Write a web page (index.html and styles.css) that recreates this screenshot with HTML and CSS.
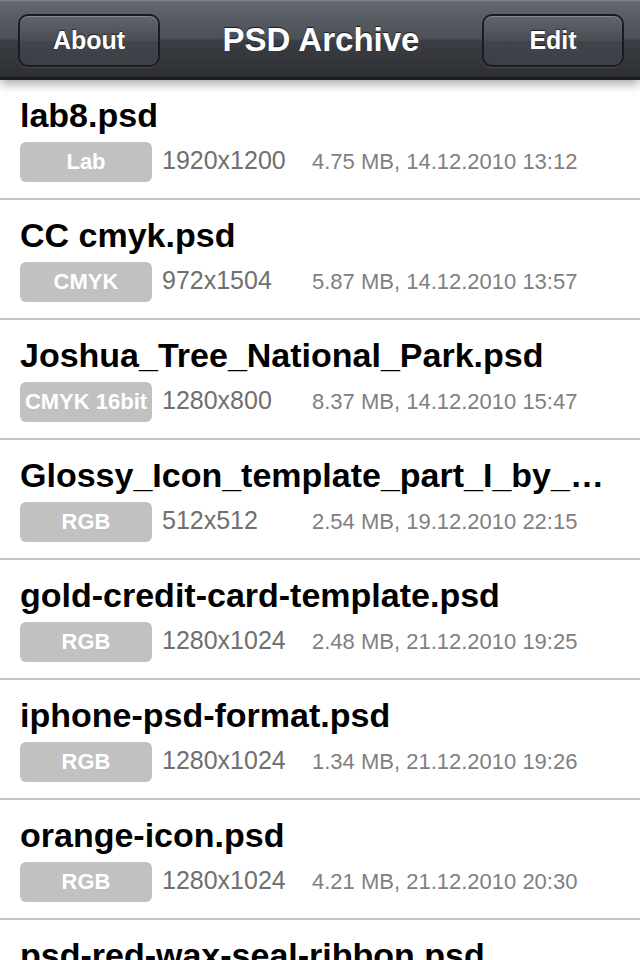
FILE: index.html
```html
<!DOCTYPE html>
<html lang="en">
<head>
    <title>PSD Archive</title>
    <link rel="stylesheet" href="styles.css">
</head>
<body>
    <div class="navbar">
        <button class="bar-btn">About</button>
        <h1 class="bar-title">PSD Archive</h1>
        <button class="bar-btn">Edit</button>
    </div>
    <ul class="files">
        <li class="file">
            <div class="name">lab8.psd</div>
            <div class="info">
                <span class="mode">Lab</span>
                <span class="size">1920x1200</span>
                <span class="meta">4.75 MB, 14.12.2010 13:12</span>
            </div>
        </li>
        <li class="file">
            <div class="name">CC cmyk.psd</div>
            <div class="info">
                <span class="mode">CMYK</span>
                <span class="size">972x1504</span>
                <span class="meta">5.87 MB, 14.12.2010 13:57</span>
            </div>
        </li>
        <li class="file">
            <div class="name">Joshua_Tree_National_Park.psd</div>
            <div class="info">
                <span class="mode">CMYK 16bit</span>
                <span class="size">1280x800</span>
                <span class="meta">8.37 MB, 14.12.2010 15:47</span>
            </div>
        </li>
        <li class="file">
            <div class="name">Glossy_Icon_template_part_I_by_Kaloyan.psd</div>
            <div class="info">
                <span class="mode">RGB</span>
                <span class="size">512x512</span>
                <span class="meta">2.54 MB, 19.12.2010 22:15</span>
            </div>
        </li>
        <li class="file">
            <div class="name">gold-credit-card-template.psd</div>
            <div class="info">
                <span class="mode">RGB</span>
                <span class="size">1280x1024</span>
                <span class="meta">2.48 MB, 21.12.2010 19:25</span>
            </div>
        </li>
        <li class="file">
            <div class="name">iphone-psd-format.psd</div>
            <div class="info">
                <span class="mode">RGB</span>
                <span class="size">1280x1024</span>
                <span class="meta">1.34 MB, 21.12.2010 19:26</span>
            </div>
        </li>
        <li class="file">
            <div class="name">orange-icon.psd</div>
            <div class="info">
                <span class="mode">RGB</span>
                <span class="size">1280x1024</span>
                <span class="meta">4.21 MB, 21.12.2010 20:30</span>
            </div>
        </li>
        <li class="file">
            <div class="name">psd-red-wax-seal-ribbon.psd</div>
            <div class="info">
                <span class="mode">RGB</span>
                <span class="size">1280x1024</span>
                <span class="meta">3.02 MB, 21.12.2010 20:41</span>
            </div>
        </li>
    </ul>
</body>
</html>
```

FILE: styles.css
```css
body {
    margin: 0;
    font-family: "Liberation Sans", Arial, sans-serif;
    background: #fff;
    overflow: hidden;
}
.navbar {
    position: relative;
    z-index: 2;
    height: 74px;
    padding: 3px 16px 0 18px;
    display: flex;
    align-items: center;
    justify-content: space-between;
    background: linear-gradient(#878b92 0px, #62666d 2px, #4b4f56 39px, #3b3e44 40px, #2d2f34 77px);
    border-bottom: 3px solid #1c1d20;
    box-shadow: 0 4px 10px rgba(0, 0, 0, 0.35);
}
.bar-btn {
    width: 142px;
    height: 53px;
    border: 2px solid #1a1b1e;
    border-radius: 10px;
    background: linear-gradient(#60646c, #4a4d54 50%, #41444a 51%, #3c3f45);
    box-shadow: inset 0 1px 1px rgba(255, 255, 255, 0.25), 0 1px 0 rgba(255, 255, 255, 0.12);
    color: #fff;
    font-family: "Liberation Sans", Arial, sans-serif;
    font-size: 25px;
    font-weight: bold;
    text-shadow: 0 -1px 1px rgba(0, 0, 0, 0.6);
}
.bar-title {
    margin: 0;
    color: #fff;
    font-size: 33px;
    font-weight: bold;
    text-shadow: 0 -1px 1px rgba(0, 0, 0, 0.7);
}
.files {
    list-style: none;
    margin: 0;
    padding: 0;
}
.file {
    height: 103px;
    padding: 15px 34px 0 20px;
    border-bottom: 2px solid #c2c2c2;
}
.name {
    font-size: 34px;
    font-weight: bold;
    line-height: 40px;
    color: #000;
    white-space: nowrap;
    overflow: hidden;
    text-overflow: ellipsis;
}
.info {
    display: flex;
    align-items: baseline;
    margin-top: 7px;
}
.mode {
    width: 132px;
    height: 40px;
    flex-shrink: 0;
    border-radius: 6px;
    background: #c1c1c1;
    color: #fff;
    font-size: 22px;
    font-weight: bold;
    line-height: 40px;
    text-align: center;
    white-space: nowrap;
}
.size {
    width: 160px;
    flex-shrink: 0;
    padding-left: 10px;
    box-sizing: border-box;
    font-size: 25px;
    color: #6f6f6f;
}
.meta {
    font-size: 22px;
    color: #808080;
    white-space: nowrap;
}
```
